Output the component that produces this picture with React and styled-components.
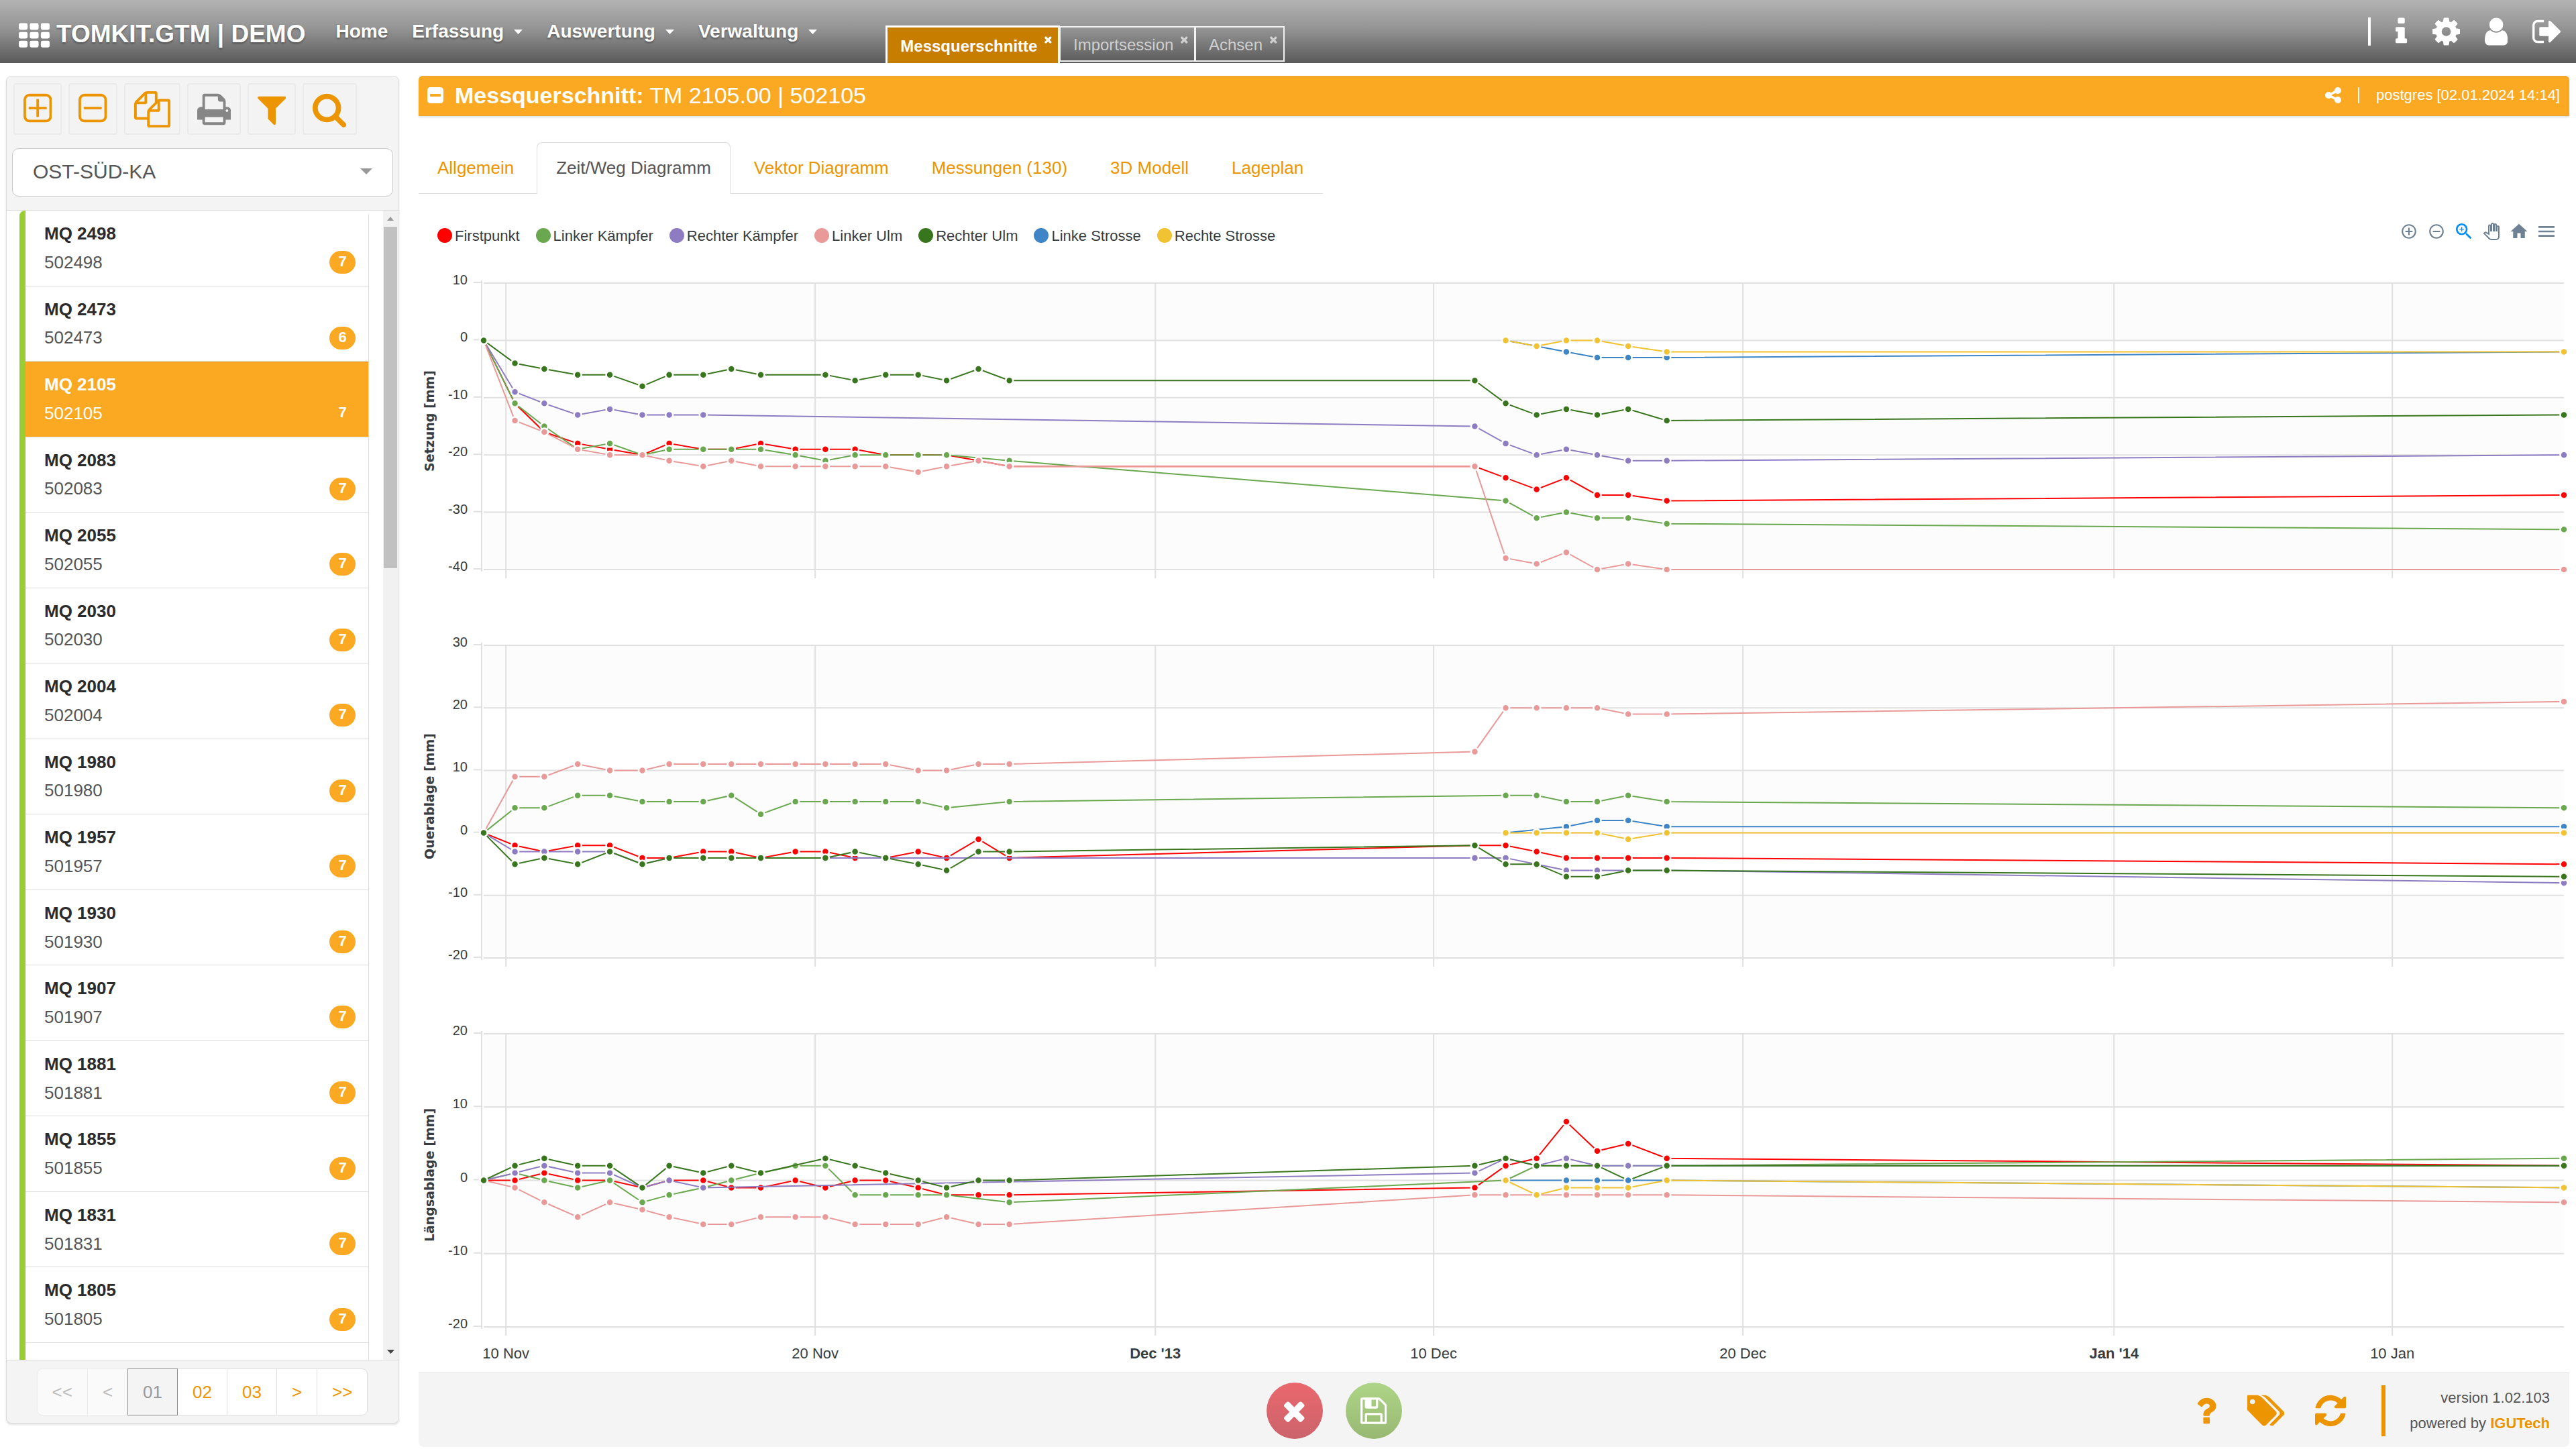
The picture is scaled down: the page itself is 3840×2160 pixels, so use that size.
import React from 'react';
import styled, { createGlobalStyle, css } from 'styled-components';

const ORANGE = '#ec9500';
const AMBER = '#fba922';
const BORDER = '#dddddd';
const PANEL = '#f4f4f4';

const GlobalStyle = createGlobalStyle`
  *, *::before, *::after { box-sizing: border-box; }
  body {
    margin: 0;
    background: #fff;
    color: #555;
    font-family: 'Liberation Sans', Arial, sans-serif;
    font-size: 26px;
  }
  button, select { font: inherit; color: inherit; margin: 0; padding: 0; }
  button { background: none; border: 0; cursor: pointer; }
  a { color: inherit; text-decoration: none; }
  ul { list-style: none; margin: 0; padding: 0; }
  svg { display: block; flex: none; }
`;

/* ---------- icons ---------- */

// x and w give the inked part of the 1792 unit high glyph
const GLYPHS = {
  th: {
    x: 0,
    w: 1792,
    d: 'M96 256h320q96 0 96 96v192q0 96-96 96h-320q-96 0-96-96v-192q0-96 96-96zm640 0h320q96 0 96 96v192q0 96-96 96h-320q-96 0-96-96v-192q0-96 96-96zm640 0h320q96 0 96 96v192q0 96-96 96h-320q-96 0-96-96v-192q0-96 96-96zM96 768h320q96 0 96 96v192q0 96-96 96h-320q-96 0-96-96v-192q0-96 96-96zm640 0h320q96 0 96 96v192q0 96-96 96h-320q-96 0-96-96v-192q0-96 96-96zm640 0h320q96 0 96 96v192q0 96-96 96h-320q-96 0-96-96v-192q0-96 96-96zM96 1280h320q96 0 96 96v192q0 96-96 96h-320q-96 0-96-96v-192q0-96 96-96zm640 0h320q96 0 96 96v192q0 96-96 96h-320q-96 0-96-96v-192q0-96 96-96zm640 0h320q96 0 96 96v192q0 96-96 96h-320q-96 0-96-96v-192q0-96 96-96z',
  },
  info: {
    x: 576,
    w: 640,
    d: 'M1216 1344v128q0 26-19 45t-45 19h-512q-26 0-45-19t-19-45v-128q0-26 19-45t45-19h64v-384h-64q-26 0-45-19t-19-45v-128q0-26 19-45t45-19h384q26 0 45 19t19 45v576h64q26 0 45 19t19 45zm-128-1152v192q0 26-19 45t-45 19h-256q-26 0-45-19t-19-45v-192q0-26 19-45t45-19h256q26 0 45 19t19 45z',
  },
  cog: {
    x: 128,
    w: 1536,
    d: 'M1152 896q0-106-75-181t-181-75-181 75-75 181 75 181 181 75 181-75 75-181zm512-109v222q0 12-8 23t-20 13l-185 28q-19 54-39 91 35 50 107 138 10 12 10 25t-9 23q-27 37-99 108t-94 71q-12 0-26-9l-138-108q-44 23-91 38-16 136-29 186-7 28-36 28h-222q-14 0-24.5-8.5t-11.5-21.5l-28-184q-49-16-90-37l-141 107q-10 9-25 9-14 0-25-11-126-114-165-168-7-10-7-23 0-12 8-23 15-21 51-66.5t54-70.5q-27-50-41-99l-183-27q-13-2-21-12.5t-8-23.5v-222q0-12 8-23t19-13l186-28q14-46 39-92-40-57-107-138-10-12-10-24 0-10 9-23 26-36 98.5-107.5t94.5-71.5q13 0 26 10l138 107q44-23 91-38 16-136 29-186 7-28 36-28h222q14 0 24.5 8.5t11.5 21.5l28 184q49 16 90 37l142-107q9-9 24-9 13 0 25 10 129 119 165 170 7 8 7 22 0 12-8 23-15 21-51 66.5t-54 70.5q26 50 41 98l183 28q13 2 21 12.5t8 23.5z',
  },
  user: {
    x: 256,
    w: 1280,
    d: 'M1536 1399q0 109-62.5 187t-150.5 78h-854q-88 0-150.5-78t-62.5-187q0-85 8.5-160.5t31.5-152 58.5-131 94-89 134.5-34.5q131 128 313 128t313-128q76 0 134.5 34.5t94 89 58.5 131 31.5 152 8.5 160.5zm-256-887q0 159-112.5 271.5t-271.5 112.5-271.5-112.5-112.5-271.5 112.5-271.5 271.5-112.5 271.5 112.5 112.5 271.5z',
  },
  signOut: {
    x: 64,
    w: 1568,
    d: 'M704 1440q0 4 1 20t.5 26.5-3 23.5-10 19.5-20.5 6.5h-320q-119 0-203.5-84.5t-84.5-203.5v-704q0-119 84.5-203.5t203.5-84.5h320q13 0 22.5 9.5t9.5 22.5q0 4 1 20t.5 26.5-3 23.5-10 19.5-20.5 6.5h-320q-66 0-113 47t-47 113v704q0 66 47 113t113 47h312l11.5 1 11.5 3 8 5.5 7 9 2 13.5zm928-544q0 26-19 45l-544 544q-19 19-45 19t-45-19-19-45v-288h-448q-26 0-45-19t-19-45v-384q0-26 19-45t45-19h448v-288q0-26 19-45t45-19 45 19l544 544q19 19 19 45z',
  },
  times: {
    x: 302,
    w: 1188,
    d: 'M1490 1322q0 40-28 68l-136 136q-28 28-68 28t-68-28l-294-294-294 294q-28 28-68 28t-68-28l-136-136q-28-28-28-68t28-68l294-294-294-294q-28-28-28-68t28-68l136-136q28-28 68-28t68 28l294 294 294-294q28-28 68-28t68 28l136 136q28 28 28 68t-28 68l-294 294 294 294q28 28 28 68z',
  },
  plusSquare: {
    x: 192,
    w: 1408,
    d: 'M1344 800v64q0 14-9 23t-23 9h-352v352q0 14-9 23t-23 9h-64q-14 0-23-9t-9-23v-352h-352q-14 0-23-9t-9-23v-64q0-14 9-23t23-9h352v-352q0-14 9-23t23-9h64q14 0 23 9t9 23v352h352q14 0 23 9t9 23zm128 448v-832q0-66-47-113t-113-47h-832q-66 0-113 47t-47 113v832q0 66 47 113t113 47h832q66 0 113-47t47-113zm128-832v832q0 119-84.5 203.5t-203.5 84.5h-832q-119 0-203.5-84.5t-84.5-203.5v-832q0-119 84.5-203.5t203.5-84.5h832q119 0 203.5 84.5t84.5 203.5z',
  },
  minusSquare: {
    x: 192,
    w: 1408,
    d: 'M1344 800v64q0 14-9 23t-23 9h-832q-14 0-23-9t-9-23v-64q0-14 9-23t23-9h832q14 0 23 9t9 23zm128 448v-832q0-66-47-113t-113-47h-832q-66 0-113 47t-47 113v832q0 66 47 113t113 47h832q66 0 113-47t47-113zm128-832v832q0 119-84.5 203.5t-203.5 84.5h-832q-119 0-203.5-84.5t-84.5-203.5v-832q0-119 84.5-203.5t203.5-84.5h832q119 0 203.5 84.5t84.5 203.5z',
  },
  minusSolid: {
    x: 128,
    w: 1536,
    d: 'M1408 960v-128q0-26-19-45t-45-19h-896q-26 0-45 19t-19 45v128q0 26 19 45t45 19h896q26 0 45-19t19-45zm256-544v960q0 119-84.5 203.5t-203.5 84.5h-960q-119 0-203.5-84.5t-84.5-203.5v-960q0-119 84.5-203.5t203.5-84.5h960q119 0 203.5 84.5t84.5 203.5z',
  },
  files: {
    x: 0,
    w: 1792,
    d: 'M1696 384q40 0 68 28t28 68v1216q0 40-28 68t-68 28h-960q-40 0-68-28t-28-68v-288h-544q-40 0-68-28t-28-68v-672q0-40 20-88t48-76l408-408q28-28 76-48t88-20h416q40 0 68 28t28 68v328q68-40 128-40h416zm-544 213l-299 299h299v-299zm-640-384l-299 299h299v-299zm196 647l316-316v-416h-384v416q0 40-28 68t-68 28h-416v640h512v-256q0-40 20-88t48-76zm956 804v-1152h-384v416q0 40-28 68t-68 28h-416v640h896z',
  },
  print: {
    x: 64,
    w: 1664,
    d: 'M448 1536h896v-256h-896v256zm0-640h896v-384h-160q-40 0-68-28t-28-68v-160h-640v640zm1152 64q0-26-19-45t-45-19-45 19-19 45 19 45 45 19 45-19 19-45zm128 0v416q0 13-9.5 22.5t-22.5 9.5h-224v160q0 40-28 68t-68 28h-960q-40 0-68-28t-28-68v-160h-224q-13 0-22.5-9.5t-9.5-22.5v-416q0-79 56.5-135.5t135.5-56.5h64v-544q0-40 28-68t68-28h672q40 0 88 20t76 48l152 152q28 28 48 76t20 88v256h64q79 0 135.5 56.5t56.5 135.5z',
  },
  filter: {
    x: 192,
    w: 1408,
    d: 'M1595 295q17 41-14 70l-493 493v742q0 42-39 59-13 5-25 5-27 0-45-19l-256-256q-19-19-19-45v-486l-493-493q-31-29-14-70 17-39 59-39h1280q42 0 59 39z',
  },
  search: {
    x: 64,
    w: 1664,
    d: 'M1216 832q0-185-131.5-316.5t-316.5-131.5-316.5 131.5-131.5 316.5 131.5 316.5 316.5 131.5 316.5-131.5 131.5-316.5zm512 832q0 52-38 90t-90 38q-54 0-90-38l-343-342q-179 124-399 124-143 0-273.5-55.5t-225-150-150-225-55.5-273.5 55.5-273.5 150-225 225-150 273.5-55.5 273.5 55.5 225 150 150 225 55.5 273.5q0 220-124 399l343 343q37 37 37 90z',
  },
  share: {
    x: 128,
    w: 1536,
    d: 'M1344 1024q133 0 226.5 93.5t93.5 226.5-93.5 226.5-226.5 93.5-226.5-93.5-93.5-226.5q0-12 2-34l-360-180q-92 86-218 86-133 0-226.5-93.5t-93.5-226.5 93.5-226.5 226.5-93.5q126 0 218 86l360-180q-2-22-2-34 0-133 93.5-226.5t226.5-93.5 226.5 93.5 93.5 226.5-93.5 226.5-226.5 93.5q-126 0-218-86l-360 180q2 22 2 34t-2 34l360 180q92-86 218-86z',
  },
  question: {
    x: 388,
    w: 1016,
    d: 'M1088 1256v240q0 16-12 28t-28 12h-240q-16 0-28-12t-12-28v-240q0-16 12-28t28-12h240q16 0 28 12t12 28zm316-600q0 54-15.5 101t-35 76.5-55 59.5-57.5 43.5-61 35.5q-41 23-68.5 65t-27.5 67q0 17-12 32.5t-28 15.5h-240q-15 0-25.5-18.5t-10.5-37.5v-45q0-83 65-156.5t143-108.5q59-27 84-56t25-76q0-42-46.5-74t-107.5-32q-65 0-108 29-35 25-107 115-13 16-31 16-12 0-25-8l-164-125q-13-10-15.5-25t5.5-28q160-266 464-266 80 0 161 31t146 83 106 127.5 41 158.5z',
  },
  tags: {
    x: 0,
    w: 1835,
    d: 'M384 448q0-53-37.5-90.5t-90.5-37.5-90.5 37.5-37.5 90.5 37.5 90.5 90.5 37.5 90.5-37.5 37.5-90.5zm1067 576q0 53-37 90l-491 492q-39 37-91 37-53 0-90-37l-715-716q-38-37-64.5-101t-26.5-117v-416q0-52 38-90t90-38h416q53 0 117 26.5t102 64.5l715 714q37 39 37 91zm384 0q0 53-37 90l-491 492q-39 37-91 37-36 0-59-14t-53-45l470-470q37-37 37-90 0-52-37-91l-715-714q-38-38-102-64.5t-117-26.5h224q53 0 117 26.5t102 64.5l715 714q37 39 37 91z',
  },
  refresh: {
    x: 128,
    w: 1536,
    d: 'M1639 1056q0 5-1 7-64 268-268 434.5t-478 166.5q-146 0-282.5-55t-243.5-157l-129 129q-19 19-45 19t-45-19-19-45v-448q0-26 19-45t45-19h448q26 0 45 19t19 45-19 45l-137 137q71 66 161 102t187 36q134 0 250-65t186-179q11-17 53-117 8-23 30-23h192q13 0 22.5 9.5t9.5 22.5zm25-800v448q0 26-19 45t-45 19h-448q-26 0-45-19t-19-45 19-45l138-138q-148-137-349-137-134 0-250 65t-186 179q-11 17-53 117-8 23-30 23h-199q-13 0-22.5-9.5t-9.5-22.5v-7q65-268 270-434.5t480-166.5q146 0 284 55.5t245 156.5l130-129q19-19 45-19t45 19 19 45z',
  },
  save: {
    x: 128,
    w: 1536,
    d: 'M512 1536h768v-384h-768v384zm896 0h128v-896q0-14-10-38.5t-20-34.5l-281-281q-10-10-34-20t-39-10v416q0 40-28 68t-68 28h-576q-40 0-68-28t-28-68v-416h-128v1280h128v-416q0-40 28-68t68-28h832q40 0 68 28t28 68v416zm-384-928v-320q0-13-9.5-22.5t-22.5-9.5h-192q-13 0-22.5 9.5t-9.5 22.5v320q0 13 9.5 22.5t22.5 9.5h192q13 0 22.5-9.5t9.5-22.5zm640 32v928q0 40-28 68t-68 28h-1344q-40 0-68-28t-28-68v-1344q0-40 28-68t68-28h928q40 0 88 20t76 48l280 280q28 28 48 76t20 88z',
  },
};

const Glyph = ({ name, size }) => {
  const { x, w, d } = GLYPHS[name];
  return (
    <svg
      width={(size * w) / 1792}
      height={size}
      viewBox={`${x} 0 ${w} 1792`}
      fill="currentColor"
      aria-hidden="true"
    >
      <path d={d} />
    </svg>
  );
};

const Caret = ({ width, height }) => (
  <svg width={width} height={height} viewBox="0 0 14 8" preserveAspectRatio="none" fill="currentColor" aria-hidden="true">
    <path d="M0 0h14L7 8z" />
  </svg>
);

/* ---------- top bar ---------- */

const TopBar = styled.header`
  display: flex;
  height: 94px;
  flex: none;
  padding: 0 23px 0 28px;
  color: #fff;
  background: linear-gradient(#b3b3b3, #949494 45%, #5a5a5a);
`;

const Brand = styled.a`
  display: flex;
  align-items: center;
  gap: 10px;
  padding-top: 8px;
  margin-right: 45px;
  font-size: 37px;
  font-weight: bold;
  line-height: 84px;
  white-space: nowrap;
  text-shadow: 0 2px 3px rgba(0, 0, 0, 0.35);
`;

const Nav = styled.nav`
  display: flex;
  align-items: center;
  gap: 36px;
  margin-right: 102px;
  font-size: 28px;
  font-weight: bold;
  text-shadow: 0 2px 3px rgba(0, 0, 0, 0.35);
`;

const NavLink = styled.a`
  display: flex;
  align-items: center;
  gap: 15px;
`;

const WindowTabs = styled.div`
  display: flex;
  align-items: flex-end;
  font-size: 24px;
`;

const WindowTab = styled.div`
  display: flex;
  gap: 11px;
  height: 53px;
  margin-bottom: 2px;
  padding: 0 9px 0 19px;
  line-height: 52px;
  color: #cfcfcf;
  border: 2px solid #f2f2f2;
  margin-left: -1px;

  ${({ $active }) => $active && css`
    height: 56px;
    margin: 0;
    line-height: 56px;
    color: #fff;
    font-weight: bold;
    background: #c77d00;
    border: 3px solid #fff;
    border-bottom: 0;
  `}
`;

const CloseTab = styled.button`
  align-self: flex-start;
  padding-top: 10px;
`;

const UserMenu = styled.div`
  display: flex;
  align-items: center;
  gap: 37px;
  margin-left: auto;
`;

const Bar = styled.span`
  width: ${({ $width }) => $width}px;
  height: ${({ $height }) => $height}px;
  background: currentColor;
`;

/* ---------- left panel ---------- */

const Page = styled.div`
  display: flex;
  flex-direction: column;
  height: 100vh;
`;

const Body = styled.div`
  display: flex;
  flex: 1;
  min-height: 0;
  gap: 29px;
  padding: 19px 10px 0 9px;
`;

const Side = styled.aside`
  display: flex;
  flex-direction: column;
  flex: none;
  width: 586px;
  margin-bottom: 38px;
  background: ${PANEL};
  border: 1px solid ${BORDER};
  border-radius: 8px;
  box-shadow: 0 2px 3px rgba(0, 0, 0, 0.12);
`;

const ToolRow = styled.div`
  display: flex;
  gap: 10px;
  padding: 10px 10px 20px;
`;

const ToolButton = styled.button`
  display: flex;
  align-items: center;
  height: 77px;
  padding: 0 13px;
  color: ${({ $muted }) => ($muted ? '#868686' : ORANGE)};
  background: #f3f3f3;
  border: 2px solid #eaeaea;
  border-radius: 4px;
`;

const SelectBox = styled.div`
  position: relative;
  margin: 0 8px 20px;
  color: #999;

  svg {
    position: absolute;
    right: 31px;
    top: 30px;
    pointer-events: none;
  }
`;

const Select = styled.select`
  width: 100%;
  height: 72px;
  padding: 0 30px 4px;
  font-size: 30px;
  color: #555;
  appearance: none;
  background: #fff;
  border: 1px solid #c8c8c8;
  border-radius: 10px;
`;

const ListArea = styled.div`
  display: flex;
  flex: 1;
  min-height: 0;
  background: #fff;
  border-top: 1px solid ${BORDER};
  border-bottom: 1px solid ${BORDER};
`;

const List = styled.ul`
  flex: 1;
  margin: 0 21px 0 19px;
  overflow: hidden;
  border-top-left-radius: 8px;
  border-top-right-radius: 8px;
`;

const ListRow = styled.li`
  border-left: 9px solid #9acd32;
`;

const Item = styled.a`
  display: block;
  padding: 13px 19px 13px 28px;
  line-height: 1.645;
  border: 0 solid ${BORDER};
  border-width: 0 1px 1px 0;
  color: ${({ $active }) => ($active ? '#fff' : '#555')};
  background: ${({ $active }) => ($active ? AMBER : '#fff')};
`;

const ItemTitle = styled.strong`
  display: block;
  color: ${({ $active }) => ($active ? '#fff' : '#2b2b2b')};
`;

const ItemLine = styled.span`
  display: flex;
  align-items: center;
  justify-content: space-between;
`;

const Badge = styled.span`
  width: 39px;
  height: 34px;
  border-radius: 17px;
  color: #fff;
  background: ${AMBER};
  font-size: 22px;
  font-weight: bold;
  line-height: 31px;
  text-align: center;
`;

const ScrollTrack = styled.div`
  display: flex;
  flex-direction: column;
  align-items: center;
  width: 22px;
  margin-right: 1px;
  padding: 9px 0;
  background: #f1f1f1;
  color: #999;

  svg:last-child {
    margin-top: auto;
    color: #444;
  }
`;

const ScrollThumb = styled.div`
  width: 20px;
  height: 30%;
  margin-top: 9px;
  background: #c1c1c1;
`;

const PagerBar = styled.div`
  display: flex;
  justify-content: center;
  padding: 12px 0 11px;
`;

const PageButton = styled.button`
  height: 70px;
  padding: 0 22px;
  margin-left: -1px;
  color: ${ORANGE};
  background: #fff;
  border: 1px solid ${BORDER};

  &:first-child { border-radius: 8px 0 0 8px; }
  &:last-child { border-radius: 0 8px 8px 0; }
  &:disabled { color: #bbb; background: #fafafa; border-color: #ececec; }

  ${({ $current }) => $current && css`
    z-index: 1;
    color: #999;
    background: ${PANEL};
    border-color: #8c8c8c;
  `}
`;

/* ---------- main panel ---------- */

const Main = styled.main`
  display: flex;
  flex-direction: column;
  flex: 1;
  min-width: 0;
  margin-bottom: 3px;
`;

const TitleBar = styled.div`
  display: flex;
  align-items: center;
  flex: none;
  height: 60px;
  padding: 0 14px 2px 13px;
  color: #fff;
  background: ${AMBER};
  border: 0 solid #e6a63a;
  border-width: 1px 0 1px;
  border-radius: 6px 6px 0 0;
  box-shadow: 0 2px 3px rgba(0, 0, 0, 0.12);
`;

const Title = styled.h1`
  margin: 0 0 0 17px;
  font-size: 34px;
  font-weight: normal;
`;

const TitleMeta = styled.div`
  display: flex;
  align-items: center;
  gap: 25px;
  margin-left: auto;
  font-size: 22px;
`;

const Tabs = styled.nav`
  display: flex;
  gap: 6px;
  align-self: flex-start;
  margin-top: 39px;
  border-bottom: 1px solid ${BORDER};
`;

const Tab = styled.a`
  height: 77px;
  margin-bottom: -1px;
  padding: 0 28px;
  line-height: 75px;
  color: ${ORANGE};
  border: 1px solid transparent;
  border-radius: 8px 8px 0 0;

  &:first-child { padding: 0 27px; }

  ${({ $active }) => $active && css`
    color: #555;
    background: #fff;
    border-color: ${BORDER};
    border-bottom-color: #fff;
  `}
`;

const ChartHead = styled.div`
  display: flex;
  align-items: flex-end;
  justify-content: space-between;
  height: 36px;
  margin: 40px 0 15px;
  padding: 0 14px 0 28px;
`;

const Legend = styled.ul`
  display: flex;
  gap: 24px;
  font-size: 22px;
  line-height: 26px;
  color: #373d3f;
`;

const LegendItem = styled.li`
  display: flex;
  align-items: center;
  gap: 4px;

  &::before {
    content: '';
    width: 22px;
    height: 22px;
    border-radius: 50%;
    background: ${({ $color }) => $color};
  }

  span { padding-top: 3px; }
`;

const ChartTools = styled.div`
  display: flex;
  align-self: flex-start;
`;

const ChartTool = styled.button`
  display: flex;
  align-items: center;
  justify-content: center;
  width: 41px;
  height: 32px;
  color: ${({ $active }) => ($active ? '#008ffb' : '#6e8192')};
`;

const Plot = styled.svg`
  width: 100%;
  height: auto;

  text { fill: #373d3f; }
`;

const Footer = styled.footer`
  display: flex;
  align-items: center;
  flex: 1;
  padding: 2px 29px 0 80px;
  background: ${PANEL};
  border-top: 1px solid ${BORDER};
  border-radius: 0 0 8px 8px;
`;

const Actions = styled.div`
  display: flex;
  flex: 1;
  justify-content: center;
  gap: 34px;
`;

const RoundButton = styled.button`
  display: flex;
  align-items: center;
  justify-content: center;
  width: 84px;
  height: 84px;
  border-radius: 50%;
  color: #fff;
  background: ${({ $tone }) => ($tone === 'red'
    ? 'linear-gradient(#ea686d, #cb636b)'
    : 'linear-gradient(#aed587, #98b872)')};
`;

const FooterTools = styled.div`
  display: flex;
  align-items: center;
  gap: 46px;
  color: ${ORANGE};
`;

const Version = styled.p`
  margin: 0 0 0 53px;
  padding-left: 36px;
  border-left: 6px solid ${ORANGE};
  font-size: 22px;
  line-height: 38px;
  text-align: right;
  color: #555;

  a {
    color: ${ORANGE};
    font-weight: bold;
  }
`;

/* ---------- data ---------- */

const SECTIONS = [
  '2498', '2473', '2105', '2083', '2055', '2030', '2004', '1980',
  '1957', '1930', '1907', '1881', '1855', '1831', '1805', '1779',
];

const SERIES = [
  { name: 'Firstpunkt', color: '#ff0000' },
  { name: 'Linker Kämpfer', color: '#6aa84f' },
  { name: 'Rechter Kämpfer', color: '#8e7cc3' },
  { name: 'Linker Ulm', color: '#ea9999' },
  { name: 'Rechter Ulm', color: '#38761d' },
  { name: 'Linke Strosse', color: '#3d85c6' },
  { name: 'Rechte Strosse', color: '#f1c232' },
];

const _ = null;

// measuring days, counted from 10 Nov
const DAYS = [
  -0.72, 0.29, 1.24, 2.32, 3.36, 4.41, 5.28, 6.38, 7.29, 8.24, 9.36, 10.33, 11.29,
  12.28, 13.33, 14.25, 15.28, 16.28, 31.33, 32.33, 33.33, 34.29, 35.29, 36.29, 37.54, 66.55,
];

const MONTH_TICKS = [
  { day: 0, label: '10 Nov' },
  { day: 10, label: '20 Nov' },
  { day: 21, label: "Dec '13", bold: true },
  { day: 30, label: '10 Dec' },
  { day: 40, label: '20 Dec' },
  { day: 52, label: "Jan '14", bold: true },
  { day: 61, label: '10 Jan' },
];

// the Strosse points were only measured from the 20th day on
const late = values => Array(19).fill(_).concat(values);

const CHARTS = [
  {
    title: 'Setzung [mm]',
    max: 10,
    min: -40,
    plotHeight: 427,
    height: 540,
    rows: [
      [0, -11, -16, -18, -19, -20, -18, -19, -19, -18, -19, -19, -19, -20, -20, -20, -21, -22, -22, -24, -26, -24, -27, -27, -28, -27],
      [0, -11, -15, -19, -18, -20, -19, -19, -19, -19, -20, -21, -20, -20, -20, -20, _, -21, _, -28, -31, -30, -31, -31, -32, -33],
      [0, -9, -11, -13, -12, -13, -13, -13, _, _, _, _, _, _, _, _, _, _, -15, -18, -20, -19, -20, -21, -21, -20],
      [0, -14, -16, -19, -20, -20, -21, -22, -21, -22, -22, -22, -22, -22, -23, -22, -21, -22, -22, -38, -39, -37, -40, -39, -40, -40],
      [0, -4, -5, -6, -6, -8, -6, -6, -5, -6, _, -6, -7, -6, -6, -7, -5, -7, -7, -11, -13, -12, -13, -12, -14, -13],
      late([0, -1, -2, -3, -3, -3, -2]),
      late([0, -1, 0, 0, -1, -2, -2]),
    ],
  },
  {
    title: 'Querablage [mm]',
    max: 30,
    min: -20,
    plotHeight: 466,
    height: 579,
    rows: [
      [0, -2, -3, -2, -2, -4, -4, -3, -3, -4, -3, -3, -4, -4, -3, -4, -1, -4, -2, -2, -3, -4, -4, -4, -4, -5],
      [0, 4, 4, 6, 6, 5, 5, 5, 6, 3, 5, 5, 5, 5, 5, 4, _, 5, _, 6, 6, 5, 5, 6, 5, 4],
      [0, -3, -3, -3, -3, -5, -4, -4, _, _, _, _, _, _, _, _, _, _, -4, -4, -5, -6, -6, -6, -6, -8],
      [0, 9, 9, 11, 10, 10, 11, 11, 11, 11, 11, 11, 11, 11, 10, 10, 11, 11, 13, 20, 20, 20, 20, 19, 19, 21],
      [0, -5, -4, -5, -3, -5, -4, -4, -4, -4, _, -4, -3, -4, -5, -6, -3, -3, -2, -5, -5, -7, -7, -6, -6, -7],
      late([0, _, 1, 2, 2, 1, 1]),
      late([0, 0, 0, 0, -1, 0, 0]),
    ],
  },
  {
    title: 'Längsablage [mm]',
    max: 20,
    min: -20,
    plotHeight: 437,
    height: 547,
    showDates: true,
    rows: [
      [0, 0, 1, 0, 0, -1, 0, 0, -1, -1, 0, -1, 0, 0, -1, -2, -2, -2, -1, 2, 3, 8, 4, 5, 3, 2],
      [0, 1, 0, -1, 0, -3, -2, -1, 0, 1, 2, 2, -2, -2, -2, -2, _, -3, _, 0, 2, 2, 2, 2, 2, 3],
      [0, 1, 2, 1, 1, -1, 0, -1, _, _, _, _, _, _, _, _, _, _, 1, 3, 2, 3, 2, 2, 2, 2],
      [0, -1, -3, -5, -3, -4, -5, -6, -6, -5, -5, -5, -6, -6, -6, -5, -6, -6, -2, -2, -2, -2, -2, -2, -2, -3],
      [0, 2, 3, 2, 2, -1, 2, 1, 2, 1, _, 3, 2, 1, 0, -1, 0, 0, 2, 3, 2, 2, 2, 0, 2, 2],
      late([0, _, 0, 0, 0, 0, -1]),
      late([0, -2, -1, -1, -1, 0, -1]),
    ],
  },
];

/* ---------- chart ---------- */

const WIDTH = 3206;
const LEFT = 97;
const RIGHT = 3198;
const TOP = 42;

const FIRST_DAY = DAYS[0];
const LAST_DAY = DAYS[DAYS.length - 1];
const dayX = day => LEFT + ((day - FIRST_DAY) / (LAST_DAY - FIRST_DAY)) * (RIGHT - LEFT);

const TimeChart = ({ title, max, min, plotHeight, height, rows, showDates }) => {
  const valueY = value => TOP + ((max - value) / (max - min)) * plotHeight;
  const bottom = TOP + plotHeight;
  const ticks = [];
  for (let v = max; v >= min; v -= 10) ticks.push(v);
  const middle = TOP + plotHeight / 2 - 8;

  return (
    <Plot viewBox={`0 0 ${WIDTH} ${height}`} role="img" aria-label={title}>
      {ticks.slice(0, -1).map((v, i) => (
        <rect
          key={v}
          x={LEFT}
          y={valueY(v)}
          width={RIGHT - LEFT}
          height={valueY(v - 10) - valueY(v)}
          fill={i % 2 ? '#ffffff' : '#fcfcfc'}
        />
      ))}
      <g stroke="#e0e0e0" strokeWidth="2">
        {MONTH_TICKS.map(({ day }) => (
          <line key={day} x1={dayX(day)} x2={dayX(day)} y1={TOP} y2={bottom + 13} />
        ))}
        {ticks.map(v => (
          <g key={v}>
            <line x1={LEFT} x2={RIGHT} y1={valueY(v)} y2={valueY(v)} />
            <line x1={82} x2={93} y1={valueY(v) - 1} y2={valueY(v) - 1} />
          </g>
        ))}
        <line x1={94} x2={94} y1={TOP - 4} y2={bottom + 3} />
      </g>
      {ticks.map(v => (
        <text key={v} x={73} y={valueY(v) + 2} fontSize="20" textAnchor="end">{v}</text>
      ))}
      <text
        transform={`translate(23 ${middle}) rotate(-90)`}
        fontFamily="'DejaVu Sans', sans-serif"
        fontSize="19"
        fontWeight="bold"
        textAnchor="middle"
      >
        {title}
      </text>
      {rows.map((row, s) => {
        const points = row
          .map((value, i) => (value === null ? null : [dayX(DAYS[i]), valueY(value)]))
          .filter(Boolean);
        const { name, color } = SERIES[s];
        return (
          <g key={name}>
            <polyline points={points.join(' ')} fill="none" stroke={color} strokeWidth="2" />
            {points.map(([x, y]) => (
              <circle key={x} cx={x} cy={y} r="5.5" fill={color} stroke="#fff" strokeWidth="2.5" />
            ))}
          </g>
        );
      })}
      {showDates && MONTH_TICKS.map(({ day, label, bold }) => (
        <text
          key={label}
          x={dayX(day)}
          y={bottom + 47}
          fontSize="22"
          fontWeight={bold ? 'bold' : 'normal'}
          textAnchor="middle"
        >
          {label}
        </text>
      ))}
    </Plot>
  );
};

const CHART_TOOLS = [
  {
    label: 'Vergrößern',
    size: 26,
    d: 'M13 7h-2v4H7v2h4v4h2v-4h4v-2h-4V7zm-1-5C6.48 2 2 6.48 2 12s4.48 10 10 10 10-4.48 10-10S17.52 2 12 2zm0 18c-4.41 0-8-3.59-8-8s3.59-8 8-8 8 3.59 8 8-3.59 8-8 8z',
  },
  {
    label: 'Verkleinern',
    size: 26,
    d: 'M7 11v2h10v-2H7zm5-9C6.48 2 2 6.48 2 12s4.48 10 10 10 10-4.48 10-10S17.52 2 12 2zm0 18c-4.41 0-8-3.59-8-8s3.59-8 8-8 8 3.59 8 8-3.59 8-8 8z',
  },
  {
    label: 'Auswahl zoomen',
    size: 32,
    active: true,
    d: 'M15.5 14h-.79l-.28-.27C15.41 12.59 16 11.11 16 9.5 16 5.91 13.09 3 9.5 3S3 5.91 3 9.5 5.91 16 9.5 16c1.61 0 3.09-.59 4.23-1.57l.27.28v.79l5 4.99L20.49 19l-4.99-5zm-6 0C7.01 14 5 11.99 5 9.5S7.01 5 9.5 5 14 7.01 14 9.5 11.99 14 9.5 14zM12 10h-2v2H9v-2H7V9h2V7h1v2h2v1z',
  },
  {
    label: 'Verschieben',
    size: 26,
    outline: true,
    d: 'M23 5.5V20c0 2.2-1.8 4-4 4h-7.3c-1.08 0-2.1-.43-2.85-1.19L1 14.83s1.26-1.23 1.3-1.25c.22-.19.49-.29.79-.29.22 0 .42.06.6.16.04.01 4.31 2.46 4.31 2.46V4c0-.83.67-1.5 1.5-1.5S11 3.17 11 4v7h1V1.5c0-.83.67-1.5 1.5-1.5S15 .67 15 1.5V11h1V2.5c0-.83.67-1.5 1.5-1.5s1.5.67 1.5 1.5V11h1V5.5c0-.83.67-1.5 1.5-1.5s1.5.67 1.5 1.5z',
  },
  { label: 'Zurücksetzen', size: 30, d: 'M10 20v-6h4v6h5v-8h3L12 3 2 12h3v8z' },
  { label: 'Menü', size: 32, d: 'M3 18h18v-2H3v2zm0-5h18v-2H3v2zm0-7v2h18V6H3z' },
];

/* ---------- page ---------- */

const TOOLS = [
  ['plusSquare', 'Neu'],
  ['minusSquare', 'Löschen'],
  ['files', 'Kopieren'],
  ['print', 'Drucken'],
  ['filter', 'Filter'],
  ['search', 'Suche'],
];

const PAGES = ['<<', '<', '01', '02', '03', '>', '>>'];

const TABS = ['Allgemein', 'Zeit/Weg Diagramm', 'Vektor Diagramm', 'Messungen (130)', '3D Modell', 'Lageplan'];

const SidePanel = () => (
  <Side>
    <ToolRow>
      {TOOLS.map(([icon, label]) => (
        <ToolButton key={icon} type="button" aria-label={label} $muted={icon === 'print'}>
          <Glyph name={icon} size={54} />
        </ToolButton>
      ))}
    </ToolRow>
    <SelectBox>
      <Select aria-label="Projekt" defaultValue="OST-SÜD-KA">
        <option>OST-SÜD-KA</option>
      </Select>
      <Caret width={18} height={9} />
    </SelectBox>
    <ListArea>
      <List>
        {SECTIONS.map(id => {
          const active = id === '2105';
          return (
            <ListRow key={id}>
              <Item href="#" $active={active}>
                <ItemTitle $active={active}>MQ {id}</ItemTitle>
                <ItemLine>
                  {`50${id}`}
                  <Badge>{id === '2473' ? 6 : 7}</Badge>
                </ItemLine>
              </Item>
            </ListRow>
          );
        })}
      </List>
      <ScrollTrack>
        <svg width="10" height="6" viewBox="0 0 10 6" fill="currentColor" aria-hidden="true">
          <path d="M0 6h10L5 0z" />
        </svg>
        <ScrollThumb />
        <Caret width={11} height={6} />
      </ScrollTrack>
    </ListArea>
    <PagerBar>
      {PAGES.map((page, i) => (
        <PageButton key={page} type="button" disabled={i < 2} $current={page === '01'}>
          {page}
        </PageButton>
      ))}
    </PagerBar>
  </Side>
);

const App = () => (
  <Page>
    <GlobalStyle />
    <TopBar>
      <Brand href="#">
        <Glyph name="th" size={46} />
        TOMKIT.GTM | DEMO
      </Brand>
      <Nav>
        <NavLink href="#">Home</NavLink>
        {['Erfassung', 'Auswertung', 'Verwaltung'].map(label => (
          <NavLink key={label} href="#">
            {label}
            <Caret width={13} height={7} />
          </NavLink>
        ))}
      </Nav>
      <WindowTabs>
        {['Messquerschnitte', 'Importsession', 'Achsen'].map((label, i) => (
          <WindowTab key={label} $active={i === 0}>
            {label}
            <CloseTab type="button" aria-label={`${label} schließen`}>
              <Glyph name="times" size={16} />
            </CloseTab>
          </WindowTab>
        ))}
      </WindowTabs>
      <UserMenu>
        <Bar $width={4} $height={42} />
        <a href="#" aria-label="Info"><Glyph name="info" size={48} /></a>
        <a href="#" aria-label="Einstellungen"><Glyph name="cog" size={48} /></a>
        <a href="#" aria-label="Benutzer"><Glyph name="user" size={48} /></a>
        <a href="#" aria-label="Abmelden"><Glyph name="signOut" size={48} /></a>
      </UserMenu>
    </TopBar>
    <Body>
      <SidePanel />
      <Main>
        <TitleBar>
          <Glyph name="minusSolid" size={28} />
          <Title><b>Messquerschnitt:</b> TM 2105.00 | 502105</Title>
          <TitleMeta>
            <Glyph name="share" size={28} />
            <Bar $width={2} $height={24} />
            <span>postgres [02.01.2024 14:14]</span>
          </TitleMeta>
        </TitleBar>
        <Tabs>
          {TABS.map((label, i) => (
            <Tab key={label} href="#" $active={i === 1}>{label}</Tab>
          ))}
        </Tabs>
        <ChartHead>
          <Legend>
            {SERIES.map(({ name, color }) => (
              <LegendItem key={name} $color={color}><span>{name}</span></LegendItem>
            ))}
          </Legend>
          <ChartTools>
            {CHART_TOOLS.map(({ label, size, active, outline, d }) => (
              <ChartTool key={label} type="button" aria-label={label} $active={active}>
                <svg
                  width={size}
                  height={size}
                  viewBox={outline ? '-1 -1 26 26' : '0 0 24 24'}
                  fill={outline ? '#fff' : 'currentColor'}
                  stroke={outline ? 'currentColor' : 'none'}
                  strokeWidth="2"
                >
                  <path d={d} />
                </svg>
              </ChartTool>
            ))}
          </ChartTools>
        </ChartHead>
        {CHARTS.map(chart => <TimeChart key={chart.title} {...chart} />)}
        <Footer>
          <Actions>
            <RoundButton type="button" aria-label="Abbrechen" $tone="red">
              <Glyph name="times" size={46} />
            </RoundButton>
            <RoundButton type="button" aria-label="Speichern" $tone="green">
              <Glyph name="save" size={46} />
            </RoundButton>
          </Actions>
          <FooterTools>
            <a href="#" aria-label="Hilfe"><Glyph name="question" size={54} /></a>
            <a href="#" aria-label="Tags"><Glyph name="tags" size={54} /></a>
            <a href="#" aria-label="Aktualisieren"><Glyph name="refresh" size={54} /></a>
          </FooterTools>
          <Version>
            version 1.02.103
            <br />
            powered by <a href="#">IGUTech</a>
          </Version>
        </Footer>
      </Main>
    </Body>
  </Page>
);

export default App;
